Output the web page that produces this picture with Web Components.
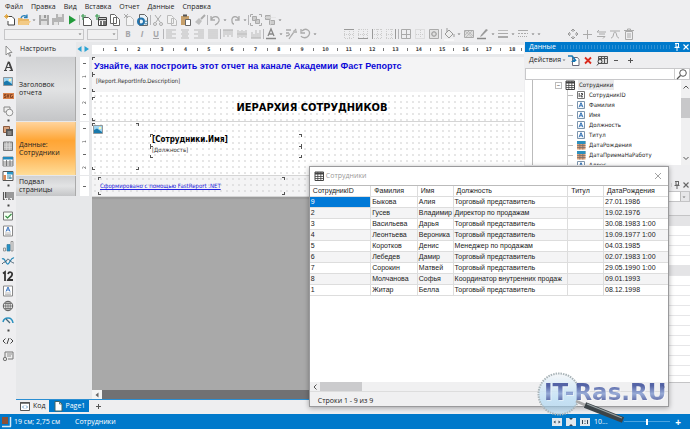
<!DOCTYPE html>
<html lang="ru">
<head>
<meta charset="utf-8">
<title>Report designer</title>
<style>
  html, body { margin: 0; height: 100%; overflow: hidden; }
  body { font: 7px/10px "Open Sans", "Noto Sans", sans-serif; color: #222; background: #eeeef0; }
</style>
</head>
<body>
<report-app></report-app>

<script>
const ICONS = {
  newrep: '<path d="M4 3.5h5l2.5 2.5v6H5V8" fill="#fff" stroke="#444"/><path d="M3.500 1v5M1 3.500h5M2 2l3 3M5 2 2 5" stroke="#e0a030" stroke-width=".8"/>',
  open: '<path d="M1 5h4l1 1h6v6H1z" fill="#e9b765"/><path d="M3 8h11l-3 4H1z" fill="#f2ca86"/><path d="M4 5c1-3 5-3 6-1M10 1.500v3H7" stroke="#2a80b8" fill="none" stroke-width="1.300"/>',
  save: '<path d="M2 2h10v10H2z" fill="#aaa"/><path d="M4 2h6v4H4zM4 8h6v4H4z" fill="#ddd"/><path d="M7 2h2v3H7z" fill="#999"/>',
  saveall: '<path d="M5 1h8v8H5zM1 5h7v7H1z" fill="#b5b5b5"/><path d="M7 1h4v3H7zM3 9h4v3H3z" fill="#e4e4e4"/>',
  play: '<path d="M4 2.500v9l7-4.500z" fill="#229b3b"/>',
  page: '<path d="M3.500 4.500h5l3 3v5h-8z" fill="#fff" stroke="#555"/><path d="M3 1v6M1 3h5" stroke="#3b9c50" stroke-width="1.200"/>',
  dialog: '<path d="M4.500 4.500h8v8h-8z" fill="#fff" stroke="#444"/><path d="M5 6.500h8M6 9h2M9 9h3M6 11h2M9 11h3" stroke="#444" stroke-width="1.500"/><path d="M3 1v6M1 3h5" stroke="#3b9c50" stroke-width="1.200"/>',
  copypage: '<path d="M2.500 1.500h4l2 2v7h-6zM5.500 4.500h4l2 2v6h-6z" fill="#fff" stroke="#666"/>',
  delpage: '<path d="M4.500 3.500h4l3 3v6h-7z" fill="#f4f4f4" stroke="#bbb"/><path d="M2 1l4 4M6 1 2 5" stroke="#aaa"/>',
  setup: '<path d="M3.500 1.500h5l3 3v8h-8z" fill="#e9f2f8" stroke="#666"/><circle cx="5" cy="8.500" r="3" fill="none" stroke="#2173ad" stroke-width="2"/><circle cx="10" cy="9.500" r="1.500" fill="none" stroke="#4c87aa"/>',
  cut: '<path d="M4 2l5 7M10 2 5 9" stroke="#aaa"/><circle cx="4" cy="11" r="1.500" fill="none" stroke="#aaa"/><circle cx="10" cy="11" r="1.500" fill="none" stroke="#aaa"/>',
  copy: '<path d="M2.500 2.500h4l2 2v6h-6zM6.500 5.500h3l2 2v5h-5z" fill="#f2f2f2" stroke="#bbb"/>',
  paste: '<path d="M2 3h8v9H2z" fill="#c7a06a"/><path d="M4 1.500h4v2H4z" fill="#555"/><path d="M6.500 6.500h5v6h-5z" fill="#fff" stroke="#666"/>',
  brush: '<path d="M12 2 8 6" stroke="#aaa" stroke-width="2"/><path d="M6 5l3 3-3 4-4-3z" fill="#c0c0c0"/>',
  undo: '<path d="M3 3v4h4M3 7c2-5 9-4 8 1-.5 2-2 3-4 4" fill="none" stroke="#aaa" stroke-width="1.300"/>',
  redo: '<path d="M11 3v4H7M11 7C9 2 3 3 4 8c0 2 1 3 2 3" fill="none" stroke="#aaa" stroke-width="1.300"/>',
  group: '<path d="M3.500 3.500h4v4h-4zM6.500 6.500h4v4h-4z" fill="#ccc" stroke="#aaa"/><path d="M1.500 4V1.500H4M10 1.500h2.500V4M12.500 10v2.500H10M4 12.500H1.500V10" fill="none" stroke="#aaa"/>',
  ungroup: '<path d="M2.500 2.500h5v4h-5zM6.500 7.500h5v4h-5z" fill="#ccc" stroke="#aaa"/><path d="M1 4.500h12M7.500 1v12" stroke="#ddd" stroke-width=".6"/>',
  left: '<path d="M2 3h10M2 5h6M2 7h10M2 9h6M2 11h10" stroke="#bbb"/>',
  center: '<path d="M3 3h8M4 5h6M3 7h8M4 9h6M3 11h8" stroke="#bbb"/>',
  right: '<path d="M2 3h10M6 5h6M2 7h10M6 9h6M2 11h10" stroke="#bbb"/>',
  justify: '<path d="M2 3h10M2 5h10M2 7h10M2 9h10M2 11h10" stroke="#bbb"/>',
  vtop: '<path d="M2 3h10" stroke="#aaa"/><path d="M3 3v7M5 3v5M7 3v7M9 3v5M11 3v7" stroke="#bbb"/>',
  vmid: '<path d="M3 3v8M5 4v6M7 3v8M9 4v6M11 3v8M2 7h10" stroke="#bbb"/>',
  vbot: '<path d="M2 11h10" stroke="#aaa"/><path d="M3 5v6M5 7v4M7 3v8M9 6v5M11 3v8" stroke="#bbb"/>',
  color: '<path d="M4 9l3-7 3 7M5 7h4" stroke="#888" stroke-width="1.300" fill="none"/><path d="M2 11.500h10" stroke="#888" stroke-width="1.500"/>',
  hilite: '<path d="M2 3h5M2 6h3M2 9c4 0 3-2 4-2M12 2 7 9l-2 3" stroke="#aaa" stroke-width="1.300" fill="none"/><path d="M9 3.500h4V6H9z" fill="#bbb"/>',
  rotate: '<path d="M4 4c4-4 9 0 7 4s-7 3-8 1M3 2v4h4" fill="none" stroke="#aaa" stroke-width="1.300"/>',
  btop: '<path d="M2 2.500h10" stroke="#999"/><path d="M2.500 4v8M7.500 4v8M11.500 4v8M2 7.500h10M3 11.500h8" stroke="#ccc" stroke-dasharray="1 1"/>',
  bbot: '<path d="M2 11.500h10" stroke="#999"/><path d="M2.500 2v9M7.500 2v9M11.500 2v9M2 7.500h10M3 2.500h8" stroke="#ccc" stroke-dasharray="1 1"/>',
  bleft: '<path d="M2.500 2v10" stroke="#999"/><path d="M7.500 2v10M11.500 2v10M4 7.500h8M4 2.500h8M4 11.500h8" stroke="#ccc" stroke-dasharray="1 1"/>',
  bright: '<path d="M11.500 2v10" stroke="#999"/><path d="M7.500 2v10M2.500 2v10M2 7.500h8M2 2.500h8M2 11.500h8" stroke="#ccc" stroke-dasharray="1 1"/>',
  ball: '<path d="M2.500 2.500h9v9h-9zM7.500 3v8M3 7.500h8" fill="none" stroke="#aaa"/>',
  bnone: '<path d="M2.500 2.500h9v9h-9zM7.500 3v8M3 7.500h8" fill="none" stroke="#ccc" stroke-dasharray="1 1"/>',
  bset: '<path d="M2.500 2.500h9v9h-9z" fill="#e2e2e2" stroke="#aaa"/><circle cx="7" cy="7" r="2.300" fill="#ccc" stroke="#999"/><circle cx="7" cy="7" r=".7" fill="#fff"/>',
  fill: '<path d="M3 7l4-4 4 4-4 4zM5 5V1" fill="#eee" stroke="#999"/><path d="M12 7v3" stroke="#999"/><path d="M2 13h10" stroke="#fff"/>',
  pattern: '<path d="M2.500 3.500h9v7h-9z" fill="#ddd" stroke="#aaa"/><path d="M3 4l7 6M6 4l5 5M10 4l-6 6M7 4 3 8" stroke="#aaa" stroke-width=".6"/>',
  pen: '<path d="M10 2 5 8l-1 2 2-1 6-6z" fill="#999"/><path d="M1 11.500h9" stroke="#888" stroke-width="1.500"/>',
  width: '<path d="M2 3.500h10" stroke="#bbb"/><path d="M2 6.500h10" stroke="#aaa"/><path d="M2 10h10" stroke="#aaa" stroke-width="2"/>',
  dash: '<path d="M2 3.500h10" stroke="#aaa"/><path d="M2 6.500h10" stroke="#aaa" stroke-dasharray="2 1"/><path d="M2 9.500h10" stroke="#aaa" stroke-dasharray="1 1"/>',
  move: '<path d="M7 2v3M7 9v3M2 7h3M9 7h3" stroke="#999"/><path d="M5 4l2-2 2 2M5 10l2 2 2-2M4 5 2 7l2 2M10 5l2 2-2 2" fill="none" stroke="#999"/>',
  plus: '<path d="M7.500 3v9M3 7.500h9" stroke="#aaa"/>',
  swap: '<path d="M3 5h9M3 5l2-2M11 9.500H3M11 9.500 9 11.500M5 7h6" stroke="#aaa" fill="none"/>',
  curve: '<path d="M2 4h10M3 11c3 0 2-6 4-6s1 6 4 6" stroke="#aaa" fill="none"/>',
  trash: '<path d="M3.500 4.500h7v8h-7zM2 3.500h10M5.500 3V2h3v1M6 6v5M8 6v5" stroke="#aaa" fill="none"/>',
  arrow: '<path d="M5 2v9l2.200-2 1.500 3.500 1-.5L8.300 8.500H11z" fill="#fff" stroke="#777" stroke-width=".8"/>',
  text: '<path d="M3 11.500h3M8.500 11.500H12M4.300 11l3-8h.4l3 8M5.500 8.500h4" stroke="#444" fill="none" stroke-width="1.200"/><path d="M8 3l3 8" stroke="#444" stroke-width="1.700"/>',
  picture: '<path d="M2.500 3.500h9v8h-9z" fill="#9ed5f2" stroke="#777" stroke-width=".7"/><path d="M3 11V8l3-1.500L11 10v1z" fill="#1979ac"/><circle cx="9" cy="6" r="1.300" fill="#fff8b8"/>',
  svg: '<path d="M2 4h11v6H2z" fill="#d8824b"/><path d="M5 5.500H3.500V7H5v1.500H3M6 5l1 3.500L8 5M11.500 5.500H9.500v3h2V7" fill="none" stroke="#75391b" stroke-width=".8"/>',
  shapes: '<path d="M3 3h6v5H3z" fill="#eee" stroke="#888"/><circle cx="8.500" cy="8.500" r="3.300" fill="#f4f4f4" stroke="#888" stroke-width=".9"/>',
  sub: '<path d="M2.500 2.500h6v6h-6z" fill="#d7a27e" stroke="#8b5b40"/><path d="M5 5h7v7H5z" fill="#555"/><path d="M6.500 7h4v4h-4z" fill="#fff" opacity=".3"/>',
  table: '<path d="M2.500 3h9v8.500h-9z" fill="#bcbcbc" stroke="#777"/><path d="M3 6h8M3 8.500h8M5.500 3v8M8.500 3v8" stroke="#ddd" stroke-width=".6"/>',
  matrix: '<path d="M2 3h10v9H2z" fill="#fff" stroke="#555" stroke-width=".7"/><path d="M2 3h10v2.500H2z" fill="#218ac0"/><path d="M2 8h10M2 10h10M5.500 6v6M9 6v6" stroke="#555" stroke-width=".7"/>',
  cross: '<path d="M2 2.500h10v9H2z" fill="#fff" stroke="#555"/><path d="M6 3h6v2.500H6z" fill="#2998ca"/><path d="M2.500 6H5v5H2.500z" fill="#dc8851"/><path d="M6 9h5M9 6v4M6 7h2" stroke="#3b84a0"/>',
  barcode: '<path d="M2.500 3v8M4.500 3v6M6 3v6M8 3v8M10 3v6M12 3v8" stroke="#555" stroke-width="1.100"/><path d="M3 10.500h9" stroke="#888" stroke-dasharray="1 1"/>',
  check: '<path d="M2.500 3h9v8h-9z" fill="#f6fff4" stroke="#777"/><path d="M4.500 7l2 2 4-4" stroke="#368e42" stroke-width="1.200" fill="none"/>',
  rich: '<path d="M2.500 2h9v10h-9z" fill="#fff" stroke="#888"/><path d="M5 7.500l2-4.500 2 4.500M6 6h2" fill="none" stroke="#3e76c0"/><path d="M4 9h6M4 10.700h6" stroke="#999" stroke-width=".7"/>',
  chart: '<path d="M2.500 9h2v3h-2zM10 2.500h2V12h-2z" fill="#eee" stroke="#777" stroke-width=".7"/><path d="M6 5.500h3V12H6z" fill="#2492c9" stroke="#35789a" stroke-width=".7"/>',
  spark: '<path d="M1 5c3-2 4 6 6 5s3-7 6-6" fill="none" stroke="#2388b9" stroke-width="1.200"/><path d="M1 10c2-3 4-1 5-4s4 3 7 3" fill="none" stroke="#455f70"/>',
  twelve: '<path d="M2 4.500 4 3v9M7 5c1-3 5-2 4 1-.5 2-3 3-4 5h5" fill="none" stroke="#333" stroke-width="1.800"/>',
  globe: '<circle cx="7" cy="7" r="4.700" fill="#eee" stroke="#555"/><path d="M2 7h10M7 2v10M3.500 4.500h7M3.500 9.500h7" stroke="#666" stroke-width=".8"/><ellipse cx="7" cy="7" rx="2.300" ry="4.700" fill="none" stroke="#666" stroke-width=".8"/>',
  gauge: '<path d="M2 8c1-5 9-6 10 1" fill="none" stroke="#2a91c0" stroke-width="1.500"/><path d="M5 5l4 4" stroke="#496878" stroke-width="1.300"/>',
  html: '<path d="M4.500 4.500 2 7l2.500 2.500M9.500 4.500 12 7 9.500 9.500M8 4 6 10" fill="none" stroke="#444"/>',
  cert: '<path d="M4 8V3h8v7H7" fill="#eee" stroke="#777"/><path d="M6 5h5M6 7h4" stroke="#777" stroke-width=".8"/><circle cx="4" cy="10" r="1.700" fill="#ddd" stroke="#777"/>',
  dot: '<path d="M6.500 1.500h2v2h-2z" fill="#444"/>',
  caret: '<path d="M1.500 6.500h3L3 8z" fill="#777"/>',
  arrows: '<path d="M1.500 7 5.500 4v6zM13 7 8.500 4v6z" fill="#2aa3d4"/>',
  pin: '<path d="M5 3.500h4M6 3.500V7h2.500V3.500M4.500 7.500h5M7 7.500V11" stroke="currentColor" fill="none"/>',
  close: '<path d="M4.500 4.500l5 5M9.500 4.500l-5 5" stroke="currentColor" stroke-width="1.100"/>',
  bigclose: '<path d="M4 4l6 6M10 4l-6 6" stroke="#999" stroke-width=".9"/>',
  edit: '<path d="M5.500 4.500h5l1.500 2v6H5.500z" fill="#fff" stroke="#667"/><path d="M1 3h4l4 5" fill="none" stroke="#1978b5" stroke-width="1.700"/><path d="M8 5v4H4z" fill="#1978b5"/>',
  del: '<path d="M4 4.500l6 6M10 4.500l-6 6" stroke="#da2a1d" stroke-width="1.800"/>',
  view: '<path d="M3.500 3.500h9v7h-9zM4 5.500h8M6.500 3v7M9.500 3v7" fill="#ddd" stroke="#555"/><circle cx="5" cy="8.500" r="2" fill="#eee" stroke="#444"/><path d="M4 10l-2 2.500" stroke="#444"/>',
  minus: '<path d="M5 7.500h4" stroke="#555"/>',
  smallplus: '<path d="M7.500 5v5M5 7.500h5" stroke="#555"/>',
  search: '<circle cx="8" cy="6" r="3.300" fill="none" stroke="#555"/><path d="M5.500 8.500 2 12" stroke="#555" stroke-width="1.200"/>',
  grid: '<path d="M3 3h8.500v8.500H3z" fill="#fff" stroke="#444"/><path d="M3 4.500h9" stroke="#444" stroke-width="2"/><path d="M3 7.500h9M3 9.500h9M5.800 3v9M8.800 3v9" stroke="#444" stroke-width=".8"/>',
  num: '<path d="M3.500 3.500h7v7h-7z" fill="#fff" stroke="#777"/><path d="M5.200 5v4M7 5.500h1.500V7H7v1.800h2" stroke="#333" fill="none" stroke-width=".9"/>',
  str: '<path d="M3.500 3.500h7v7h-7z" fill="#fff" stroke="#7c95ad"/><path d="M5 9.300 7 4.700l2 4.600M6 7.800h2" stroke="#2b6bb0" fill="none"/>',
  date: '<path d="M3 3h8.500v8.500H3z" fill="#dba078"/><path d="M3 3h8.500v3H3z" fill="#2d90be"/><path d="M3 7.500h8.500M3 9.500h8.500M5.800 6v5.500M8.800 6v5.500" stroke="#7c706c" stroke-width=".8"/>',
  code: '<path d="M2.500 3.500h9v8h-9z" fill="#fff" stroke="#555"/><path d="M2 4h10" stroke="#555" stroke-width="1.500"/><path d="M6 6.500 4.500 8 6 9.500M8 6.500 9.500 8 8 9.500" fill="none" stroke="#3f7db5" stroke-width=".8"/>',
  sheet: '<path d="M4 2.500h4.500L11 5v7H4z" fill="#fff" stroke="#466"/><path d="M8.500 2.500V5H11" fill="none" stroke="#466" stroke-width=".8"/>',
  pos: '<path d="M2 2h6v7H2z" fill="#8a5037"/><path d="M10.500 2v9.500M2 11.500h9" stroke="#d6e8f4" stroke-width="1.500"/>',
  fitw: '<path d="M2 3h10v8H2z" fill="#e0e8ee"/><path d="M3.500 7l2-1.500v3zM10.500 7l-2-1.500v3z" fill="#345"/>',
  fitp: '<path d="M2 3h10v8H2z" fill="#e0e8ee"/><path d="M5 3h4L7 5zM5 11h4L7 9z" fill="#345"/>',
  full: '<path d="M2 3h10v8H2z" fill="#e0e8ee"/><path d="M4.500 5v4M9.500 5v4M7 5.500v1M7 8v1" stroke="#345"/>',
  up: '<path d="M4.500 8.500 7 6l2.500 2.500" fill="none" stroke="#555"/>',
  down: '<path d="M4.500 6 7 8.500 9.500 6" fill="none" stroke="#555"/>',
  prev: '<path d="M8.500 4.500 6 7l2.500 2.500" fill="none" stroke="#555"/>',
  next: '<path d="M6 4.500 8.500 7 6 9.500" fill="none" stroke="#555"/>',
  tri: '<path d="M8.500 4.500v5L5.500 7z" fill="#666"/>'
};

const define = (name, render) => customElements.define(name, class extends HTMLElement {
  constructor() { super(); this.attachShadow({ mode: 'open' }); }
  connectedCallback() { this.shadowRoot.innerHTML = render(this); }
});
const TAHOMA = '"DejaVu Sans Condensed", "DejaVu Sans", sans-serif';

define('ui-icon', el => {
  const n = el.getAttribute('name'), w = n === 'caret' ? 6 : 14;
  return `<style>:host{display:block;flex:none;width:${w}px;height:14px}svg{display:block}</style>
  <svg width="${w}" height="14" viewBox="0 0 ${w} 14" fill="none" aria-hidden="true">${ICONS[n]}</svg>`;
});

const BTN = 'button{border:0;background:none;padding:0;margin:0;font:inherit;color:inherit;display:block;flex:none}';
const icon = n => `<ui-icon name="${n}"></ui-icon>`;
const btn = n => `<button type="button" aria-label="${n}">${icon(n)}</button>`;

define('menu-bar', () => `<style>:host{display:block}nav{display:flex;gap:8px;padding:1px 5px 1px;line-height:11px}a{color:#222;text-decoration:none}</style>
  <nav>${['Файл','Правка','Вид','Вставка','Отчет','Данные','Справка'].map(t => `<a href="#">${t}</a>`).join('')}</nav>`);

/* items: icon names; "|" separator, ":" grip, "_" wide gap */
define('tool-bar', el => `<style>:host{display:flex;align-items:center;height:14px;overflow:hidden}${BTN}
  i{flex:none;width:1px;height:10px;background:#b5b5b8}
  b{flex:none;width:4px;height:10px;background:radial-gradient(circle,#bbb 35%,transparent 40%) 0 0/2px 2px}
  u{flex:none;width:20px}
  .t{width:14px;color:#a5a5a8;font-size:8px;font-weight:bold;text-align:center}</style><slot></slot>
  ${el.getAttribute('items').split(' ').map(n => n === '|' ? '<i></i>' : n === ':' ? '<b></b>' : n === '_' ? '<u></u>' :
    n === 'B' ? '<button type="button" class="t">B</button>' :
    n === 'I' ? '<button type="button" class="t" style="font-style:italic">I</button>' :
    n === 'U' ? '<button type="button" class="t" style="text-decoration:underline">U</button>' : btn(n)).join('')}`);

define('flat-select', el => `<style>:host{display:block;flex:none;width:var(--w)}label{display:flex;align-items:center;border:1px solid #c6c6c8;background:#f0f0f1;height:9px}
  select{flex:1;min-width:0;border:0;background:none;appearance:none;height:9px;font:inherit;padding:0}</style>
  <label><select aria-label="${el.getAttribute('label')}"></select><ui-icon name="caret"></ui-icon></label>`);

define('tool-palette', () => `<style>:host{display:block;padding-top:1px;background:#eeeef0}${BTN}
  button{width:16px;height:15px;padding:0 1px;overflow:hidden}button.d{height:5px}</style>
  ${'arrow text picture svg shapes dot sub table matrix cross dot barcode dot check rich chart spark twelve rich globe gauge dot html cert'.split(' ')
    .map(n => `<button type="button" aria-label="${n}" class="${n === 'dot' ? 'd' : ''}">${icon(n)}</button>`).join('')}`);

define('ruler-top', () => `<style>:host{display:grid;grid-template-columns:repeat(36,minmax(0,1fr)) 6px;padding-left:6px;background:#fff;
  margin:3px 0 2px;line-height:9px;font-size:5px;font-weight:bold;color:#444;overflow:hidden;font-family:${TAHOMA}}
  span{display:flex;justify-content:center;align-items:center}i{width:1px;height:3px;background:#777}</style>
  ${Array.from({ length: 37 }, (_, k) => `<span>${k % 2 ? (k + 1) / 2 : '<i></i>'}</span>`).join('')}`);

define('report-band', el => {
  const marks = el.getAttribute('marks').split(' ');
  return `<style>:host{display:grid;grid-template-columns:60px 4px 9px 3px minmax(0,1fr);height:var(--h);margin-bottom:1px}
  .head{display:flex;flex-direction:column;justify-content:center;padding:0 3px;border-right:1px solid #aaa;line-height:8px;
    background:linear-gradient(#d0d1d3,#e2e3e4 50%,#c4c5c7);box-sizing:border-box}
  .head.on{background:linear-gradient(#ffd49c,#ffa534 35%,#ffb250 60%,#ffdd98);border-right-color:#e8c48a}
  .rule{grid-column:3;background:#fff;display:flex;flex-direction:column;justify-content:space-around;align-items:center;
    font-size:5px;line-height:5px;color:#555;font-family:${TAHOMA}}
  .rule i{width:3px;height:1px;background:#666}.rule span{writing-mode:vertical-rl;transform:rotate(180deg);line-height:5px}
  .body{grid-column:5;position:relative;overflow:hidden;background:radial-gradient(circle,#d4d4d4 .5px,transparent 1px) 0 0/6px 6px #fff;
    box-shadow:0 1px #d5d5d5}
  .body.grey{background-color:#f4f4f5}</style>
  <div class="head ${el.hasAttribute('active') ? 'on' : ''}">${el.getAttribute('name').split('|').map(t => `<span>${t}</span>`).join('')}</div>
  <div class="rule">${marks.map(m => m === '-' ? '<i></i>' : `<span>${m}</span>`).join('')}</div>
  <div class="body ${el.hasAttribute('grey') ? 'grey' : ''}"><slot></slot></div>`;
});

/* an object placed on the report's free canvas, with corner markers */
define('report-object', () => `<style>:host{position:absolute;left:var(--x);top:var(--y);width:var(--w);height:var(--h);box-sizing:border-box;
  display:flex;flex-direction:column;padding:0 2px;white-space:nowrap;font-family:${TAHOMA};
  background:linear-gradient(#555,#555) 0 0/3px 1px,linear-gradient(#555,#555) 0 0/1px 3px,linear-gradient(#555,#555) 100% 0/3px 1px,
  linear-gradient(#555,#555) 100% 0/1px 3px,linear-gradient(#555,#555) 0 100%/3px 1px,linear-gradient(#555,#555) 0 100%/1px 3px,
  linear-gradient(#555,#555) 100% 100%/3px 1px,linear-gradient(#555,#555) 100% 100%/1px 3px;background-repeat:no-repeat;background-color:var(--bg,transparent)}
  </style><slot></slot>`);

define('report-designer', () => `<style>:host{display:flex;flex-direction:column;min-width:0;background:#e7e8ea}
  .top{display:grid;grid-template-columns:60px 16px minmax(0,1fr);line-height:14px}
  .top>span{padding-left:4px;background:#eeeef0}
  .bands{padding-top:1px}
  .rest{flex:1;display:grid;grid-template-columns:76px minmax(0,1fr)}
  .grey{background:#a9a9a9;box-shadow:inset 0 2px 1px #9b9b9b;display:flex;flex-direction:column;justify-content:flex-end}
  .bar{display:flex;height:9px;background:#717173}
  .bar button{background:#f4f4f4;height:9px;width:10px;display:flex;align-items:center;justify-content:center;overflow:hidden;border:0;padding:0}
  .blue{font:bold 9px/11px "Liberation Sans",Arial,sans-serif;color:#0b08d8;text-decoration:none}
  .desc{font-size:6px;line-height:8px;color:#333}
  .title{font-size:11px;line-height:22px;font-weight:bold;text-align:center;color:#000}
  .name{font-size:8px;line-height:11px;font-weight:bold;color:#000}
  .foot{font-size:6px;line-height:17px;color:#2422dd}</style>
  <div class="top"><span>Настроить</span><ui-icon name="arrows"></ui-icon><ruler-top></ruler-top></div>
  <div class="bands">
   <report-band name="Заголовок|отчета" marks="- 1 - 2 -" style="--h:64px">
    <report-object style="--x:0px;--y:0px;--w:calc(100% + 8px);--h:18px;--bg:#f4f4f5"><a class="blue" href="#" style="padding-top:4px">Узнайте, как построить этот отчет на канале Академии Фаст Репортс</a></report-object>
    <report-object style="--x:0px;--y:17px;--w:calc(100% + 8px);--h:18px;--bg:#f4f4f5"><span class="desc" style="padding:3px 2px">[Report.ReportInfo.Description]</span></report-object>
    <report-object style="--x:0px;--y:40px;--w:calc(100% + 8px);--h:24px"><span class="title">ИЕРАРХИЯ СОТРУДНИКОВ</span></report-object>
   </report-band>
   <report-band name="Данные:|Сотрудники" active marks="- 1 - 2" style="--h:53px">
    <report-object style="--x:0px;--y:1px;--w:47px;--h:47px"><ui-icon name="picture" style="margin-left:-3px;margin-top:-1px"></ui-icon></report-object>
    <report-object style="--x:58px;--y:12px;--w:152px;--h:13px"><span class="name">[Сотрудники.Имя]</span></report-object>
    <report-object style="--x:58px;--y:24px;--w:152px;--h:12px"><span class="desc">[Должность]</span></report-object>
   </report-band>
   <report-band name="Подвал|страницы" grey marks="-" style="--h:20px">
    <report-object style="--x:6px;--y:1px;--w:187px;--h:18px"><a class="foot" href="#">Сформировано с помощью FastReport .NET</a></report-object>
   </report-band>
  </div>
  <div class="rest"><div></div><div class="grey"><div class="bar"><button type="button" aria-label="Влево"><ui-icon name="tri"></ui-icon></button></div></div></div>`);

define('page-tabs', () => `<style>:host{display:flex;border-top:1px solid #2b8ed2;height:12px;margin-bottom:2px;line-height:12px}${BTN}
  button{display:flex;align-items:center;height:12px;gap:1px;padding:0 3px 0 2px}button.on{background:#0079cb;color:#fff;padding-right:4px}</style>
  <button type="button">${icon('code')} Код</button><button type="button" class="on">${icon('sheet')} Page1</button><button type="button" aria-label="Добавить">${icon('smallplus')}</button>`);

define('panel-title', () => `<style>:host{display:flex;align-items:center;height:10px;padding-left:4px;overflow:hidden}
  span{flex:1;display:flex;align-items:center;gap:4px}span::after{content:"";flex:1;height:4px;opacity:.18;background:radial-gradient(circle,currentColor .5px,transparent 1px) 0 0/3px 2px}
  ${BTN}button{width:9px;display:flex;justify-content:center}</style><span><slot></slot></span><button type="button" aria-label="Закрепить">${icon('pin')}</button><button type="button" aria-label="Закрыть">${icon('close')}</button>`);

define('data-panel', () => `<style>:host{display:flex;flex-direction:column;background:#eeeef0}
  panel-title{background:#0079cb;color:#fff}
  .tools{display:flex;align-items:center;padding-left:4px;height:16px}${BTN}
  .find{display:flex;align-items:center;height:12px;background:#fff;border:1px solid #c8c8ca;box-sizing:border-box}
  input{flex:1;min-width:0;border:0;padding:0;font:inherit;outline:0;background:none;height:9px}
  .find button{border-left:1px solid #ccc;height:10px;display:flex;align-items:center}
  .box{display:flex;background:#fff;height:85px;overflow:hidden}
  ul{flex:1;list-style:none;margin:0 0 0 7px;padding:0 0 0 22px;font:6px/10px ${TAHOMA};border-left:1px solid #bbb}
  li{display:flex;align-items:center;height:10px;gap:1px}
  li:first-child span{background:#e9e9eb;padding:0 1px}
  li:first-child::before{content:"−";width:5px;height:5px;line-height:4px;border:1px solid #bbb;font-size:5px;text-align:center}
  li+li{margin-left:12px}
  li+li::before{content:"";width:5px;height:10px;flex:none;border-left:1px solid #ccc;background:linear-gradient(#bbb,#bbb) 0 5px/5px 1px no-repeat}
  .sb{width:9px;background:#f0f0f1;display:flex;flex-direction:column;align-items:center;overflow:hidden}
  .sb i{width:9px;height:20px;background:#c8c8ca;margin:4px 0 auto}
  .tabs{height:15px}</style>
  <panel-title>Данные</panel-title>
  <div class="tools"><button type="button">Действия</button>${icon('caret')}${['edit','del','view','minus','smallplus'].map(btn).join('')}</div>
  <div class="find"><input aria-label="Поиск"><button type="button" aria-label="Найти">${icon('search')}</button></div>
  <div class="box"><ul><li>${icon('grid')}<span>Сотрудники</span></li>${[['num','СотрудникID'],['str','Фамилия'],['str','Имя'],['str','Должность'],['str','Титул'],['date','ДатаРождения'],['date','ДатаПриемаНаРаботу'],['str','Адрес']].map(([i, t]) => `<li>${icon(i)}<span>${t}</span></li>`).join('')}</ul>
  <div class="sb">${icon('up')}<i></i>${icon('down')}</div></div>
  <div class="tabs"></div>`);

define('property-panel', () => `<style>:host{display:flex;flex-direction:column;flex:1;background:#eeeef0;color:#666}
  .combo{display:flex;border:1px solid #c4c4c6;background:#fff;height:9px;margin:1px 0}.combo select{flex:1;appearance:none;border:0;background:none;height:9px;padding:0}
  .combo i{width:8px;background:#e6e6e8;border-left:1px solid #bbb;display:flex;align-items:center}
  .tools{height:12px;border-bottom:1px solid #c4c4c6}
  .rows{height:166px;background:linear-gradient(#e4e4e6,#e4e4e6) 0 0/100% 10px no-repeat,linear-gradient(#e4e4e6,#e4e4e6) 0 49px/100% 10px no-repeat,repeating-linear-gradient(#fff 0 9px,#e6e6e8 9px 10px)}
  .end{border-top:1px solid #c4c4c6}</style>
  <panel-title></panel-title><div class="combo"><select aria-label="Объект"></select><i>${icon('caret')}</i></div><div class="tools"></div><div class="rows"></div><div class="end"></div>`);

const ROWS = [['9','Быкова','Алия','Торговый представитель','','27.01.1986'],['2','Гусев','Владимир','Директор по продажам','','19.02.1976'],
  ['3','Васильева','Дарья','Торговый представитель','','30.08.1983 1:00'],['4','Леонтьева','Вероника','Торговый представитель','','19.09.1977 1:00'],
  ['5','Коротков','Денис','Менеджер по продажам','','04.03.1985'],['6','Лебедев','Дамир','Торговый представитель','','02.07.1983 1:00'],
  ['7','Сорокин','Матвей','Торговый представитель','','29.05.1990 1:00'],['8','Молчанова','Софья','Координатор внутренних продаж','','09.01.1993'],
  ['1','Житар','Белла','Торговый представитель','','08.12.1998']];
define('data-window', () => `<style>:host{display:flex;flex-direction:column;background:#fff;border:1px solid #9a9a9c;box-sizing:border-box;box-shadow:0 1px 5px #0005}
  header{display:flex;align-items:center;height:18px;padding:0 3px 0 2px;color:#999;border-bottom:1px solid #bbb}header span{flex:1}${BTN}
  table{border-collapse:collapse;table-layout:fixed;width:100%;font:7px/10px "Liberation Sans",Arial,sans-serif;color:#222}
  th,td{padding:0 0 0 1px;height:10px;text-align:left;white-space:nowrap;font-weight:normal;border-right:1px solid #ddd;border-bottom:1px solid #ddd}
  th{padding-left:3px;height:9px}th:last-child,td:last-child{border-right:0}
  tbody tr:nth-child(even){background:#f4f4f5}
  tbody tr:first-child td:first-child{background:#0079d7;color:#fff}
  .space{flex:1}
  .bar{display:flex;align-items:center;height:9px;background:#f0f0f1;overflow:hidden}.bar i{width:42px;height:9px;background:#cbcbcd}.bar button:last-child{margin-left:auto}
  .bar button{width:10px;height:14px;overflow:hidden;display:flex;justify-content:center}
  footer{height:15px;line-height:17px;background:#f0f0f1;border-top:1px solid #ddd;padding-left:8px;box-sizing:border-box}</style>
  <header>${icon('grid')}<span>Сотрудники</span><button type="button" aria-label="Закрыть">${icon('bigclose')}</button></header>
  <table><colgroup><col style="width:17%"><col style="width:13%"><col style="width:10%"><col style="width:32%"><col style="width:10%"><col></colgroup>
  <thead><tr>${['СотрудникID','Фамилия','Имя','Должность','Титул','ДатаРождения'].map(t => `<th>${t}</th>`).join('')}</tr></thead>
  <tbody>${ROWS.map(r => `<tr>${r.map(t => `<td>${t}</td>`).join('')}</tr>`).join('')}</tbody></table>
  <div class="space"></div>
  <div class="bar"><button type="button" aria-label="Влево">${icon('prev')}</button><i></i><button type="button" aria-label="Вправо">${icon('next')}</button></div>
  <footer>Строки 1 - 9 из 9</footer>`);

define('status-bar', () => `<style>:host{display:flex;align-items:center;height:15px;background:#0079cb;color:#fff}
  .pos{width:75px;display:flex;align-items:center}.right{margin-left:auto;display:flex;align-items:center}${BTN}
  .pct{width:30px;padding-left:2px}input{appearance:none;width:46px;height:6px;margin:0;background:linear-gradient(#4ba3df,#4ba3df) 0 50%/100% 1px no-repeat}
  input::-webkit-slider-thumb{appearance:none;width:2px;height:6px;background:#fff}
  .plus{width:20px;padding-right:4px;text-align:center;font-size:10px;font-weight:bold}</style>
  <span class="pos">${icon('pos')}19 см; 2,75 см</span><span>Сотрудники</span>
  <span class="right">${['fitw','fitp','full'].map(btn).join('')}<span class="pct">10...</span><input type="range" aria-label="Масштаб"><button type="button" class="plus">+</button></span>`);

define('site-logo', () => `<style>:host{display:block;width:130px;height:53px}svg{display:block;position:absolute}
  span{position:absolute;left:7px;top:9px;font:bold 23px/23px "DejaVu Sans",sans-serif;color:transparent;white-space:nowrap;
  background:linear-gradient(#45559e 20%,#8fa4d4 55%,#5563a2 85%);background-clip:text;-webkit-background-clip:text;filter:drop-shadow(1px 1px #fff8);opacity:.9}</style>
  <svg width="130" height="53" viewBox="0 0 130 53"><defs><linearGradient id="g" x2="0" y2="1"><stop stop-color="#f4f6f8" stop-opacity=".9"/><stop offset=".6" stop-color="#bfe0f6" stop-opacity=".8"/><stop offset="1" stop-color="#7fc0ea" stop-opacity=".3"/></linearGradient></defs>
  <circle cx="22" cy="22" r="20.500" fill="url(#g)" stroke="#a9b4b8" stroke-width="2" stroke-dasharray="1.500 1"/>
  <path d="M39 29l9 4" stroke="#aaa" stroke-width="3"/><path d="M48 33l38 15" stroke="#3d4448" stroke-width="6"/><path d="M50 32l35 14" stroke="#99a3a6" stroke-width="1.200"/></svg>
  <span>IT-Ras.RU</span>`);

define('report-app', () => `<style>:host{display:flex;flex-direction:column;height:100vh;position:relative;overflow:hidden}
  .main{flex:1;min-height:0;display:grid;grid-template-columns:16px minmax(0,1fr) 165px}
  .mid{display:flex;flex-direction:column;min-width:0;padding-right:1px}.mid report-designer{flex:1}
  aside{display:flex;flex-direction:column}
  tool-bar+tool-bar{margin-bottom:1px;overflow:hidden}
  data-window{position:absolute;right:21px;bottom:22px;width:52.200%;height:241px}
  site-logo{position:absolute;right:23px;bottom:4px}
  .r1{padding-left:3px}flat-select{margin-right:3px}</style>
  <menu-bar></menu-bar>
  <tool-bar class="r1" items="newrep open caret save saveall play | page dialog copypage delpage setup | cut copy paste brush | undo caret redo caret | group ungroup caret"></tool-bar>
  <tool-bar items="B I U | left center right justify | vtop vmid vbot | color caret hilite rotate caret _ : btop bbot bleft bright | ball bnone bset | fill caret pattern pen caret width caret dash caret caret _ : move plus swap curve trash"><flat-select label="Шрифт" style="--w:80px;margin-left:4px"></flat-select><flat-select label="Размер" style="--w:31px"></flat-select></tool-bar>
  <div class="main"><tool-palette></tool-palette><div class="mid"><report-designer></report-designer><page-tabs></page-tabs></div>
  <aside><data-panel></data-panel><property-panel></property-panel></aside></div>
  <status-bar></status-bar><data-window role="dialog" aria-label="Сотрудники"></data-window><site-logo></site-logo>`);
</script>
</body>
</html>
